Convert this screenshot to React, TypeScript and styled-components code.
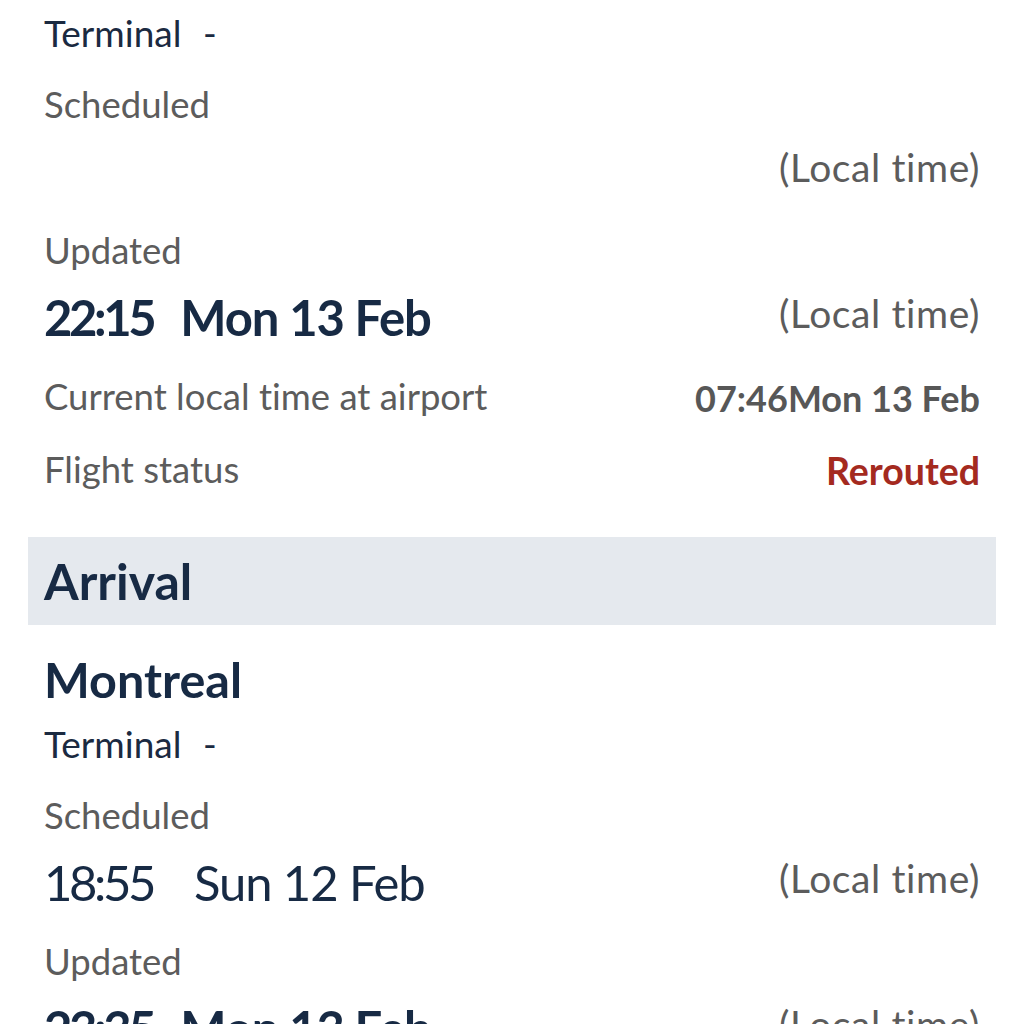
import styled, { createGlobalStyle } from "styled-components";

const GlobalStyle = createGlobalStyle`
    html, body {
        margin: 0;
        padding: 0;
        background: #ffffff;
    }
    body {
        font-family: Lato, "Open Sans", "Liberation Sans", sans-serif;
        font-variant-ligatures: none;
        color: #1b2a41;
    }
`

type Field = {
    label: string;
    time?: string;
    date?: string;
    bold?: boolean;
};

const departure: Field[] = [
    { label: "Scheduled" },
    { label: "Updated", time: "22:15", date: "Mon 13 Feb", bold: true },
];

const arrival: Field[] = [
    { label: "Scheduled", time: "18:55", date: "Sun 12 Feb" },
    { label: "Updated", time: "23:35", date: "Mon 13 Feb", bold: true },
];

function TimeField({ field }: { field: Field }) {
    return (
        <FieldWrap>
            <Label>{field.label}</Label>
            <ValueRow>
                <BigTime $bold={field.bold}>
                    {field.time && (
                        <>
                            <span className="time">{field.time}</span>
                            <span className="date">{field.date}</span>
                        </>
                    )}
                </BigTime>
                <Note>(Local time)</Note>
            </ValueRow>
        </FieldWrap>
    )
}

export default function App() {
    return (
        <>
            <GlobalStyle />
            <Page>
                <Block>
                    <Terminal>Terminal <span className="dash">-</span></Terminal>
                    {departure.map((f) => (
                        <TimeField key={f.label} field={f} />
                    ))}
                    <InfoRow>
                        <Label>Current local time at airport</Label>
                        <InfoValue>07:46Mon 13 Feb</InfoValue>
                    </InfoRow>
                    <InfoRow>
                        <Label>Flight status</Label>
                        <InfoValue $alert>Rerouted</InfoValue>
                    </InfoRow>
                </Block>

                <SectionBar>Arrival</SectionBar>

                <Block>
                    <City>Montreal</City>
                    <Terminal $tight>Terminal <span className="dash">-</span></Terminal>
                    {arrival.map((f) => (
                        <TimeField key={f.label} field={f} />
                    ))}
                </Block>
            </Page>
        </>
    )
}

const Page = styled.main`
    width: 968px;
    margin: 0 auto;
    padding: 13px 0 40px;
`

const Block = styled.section`
    padding: 0 16px;
    display: flex;
    flex-direction: column;
`

const Terminal = styled.div<{ $tight?: boolean }>`
    font-size: 37px;
    line-height: 40px;
    color: #1b2a41;
    margin-top: ${(p) => (p.$tight ? "17px" : "0")};
    white-space: pre;

    & .dash {
        margin-left: 12px;
    }
`

const FieldWrap = styled.div`
    margin-top: 31px;
    display: flex;
    flex-direction: column;
    gap: 19px;
`

const Label = styled.div`
    font-size: 36.5px;
    line-height: 40px;
    color: #5c5c5c;
`

const ValueRow = styled.div`
    display: flex;
    justify-content: space-between;
    align-items: center;
    height: 56px;
`

const BigTime = styled.div<{ $bold?: boolean }>`
    font-size: 49px;
    line-height: 56px;
    font-weight: ${(p) => (p.$bold ? 700 : 400)};
    color: #172a44;
    display: flex;
    gap: ${(p) => (p.$bold ? "27px" : "41px")};

    & .time {
        letter-spacing: -3.4px;
    }

    & .date {
        letter-spacing: -1.1px;
    }
`

const Note = styled.div`
    font-size: 39px;
    line-height: 40px;
    letter-spacing: 0.6px;
    color: #5c5c5c;
    margin-top: -8px;
`

const InfoRow = styled.div`
    margin-top: 29px;
    display: flex;
    justify-content: space-between;
    align-items: center;
`

const InfoValue = styled.div<{ $alert?: boolean }>`
    font-size: ${(p) => (p.$alert ? "37.5px" : "36px")};
    line-height: 40px;
    font-weight: 700;
    color: ${(p) => (p.$alert ? "#a42a1f" : "#575757")};
    margin-top: 4px;
`

const SectionBar = styled.h2`
    margin: 46px 0 0;
    height: 88px;
    padding: 0 16px;
    display: flex;
    align-items: center;
    background: #e5e9ee;
    font-size: 50px;
    font-weight: 700;
    color: #172a44;
`

const City = styled.h3`
    margin: 26px 0 0;
    font-size: 48.5px;
    line-height: 56px;
    font-weight: 700;
    color: #172a44;
`
